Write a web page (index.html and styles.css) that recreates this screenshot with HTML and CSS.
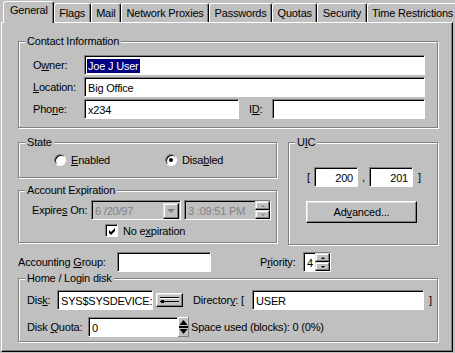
FILE: index.html
```html
<!DOCTYPE html>
<html lang="en">
<head>
  <meta charset="UTF-8">
  <title>User Properties</title>
  <link rel="stylesheet" href="styles.css">
</head>
<body>
<div class="tabs">
  <div class="tab active">General</div>
  <div class="tab">Flags</div>
  <div class="tab">Mail</div>
  <div class="tab">Network Proxies</div>
  <div class="tab">Passwords</div>
  <div class="tab">Quotas</div>
  <div class="tab">Security</div>
  <div class="tab">Time Restrictions</div>
</div>

<div class="panel">
  <div class="group contact">
    <div class="group-title">Contact Information</div>
    <div class="row">
      <span class="lbl lbl-contact">O<u>w</u>ner:</span>
      <div class="field w-full"><span class="selected">Joe J User</span></div>
    </div>
    <div class="row">
      <span class="lbl lbl-contact"><u>L</u>ocation:</span>
      <div class="field w-full">Big Office</div>
    </div>
    <div class="row">
      <span class="lbl lbl-contact">Pho<u>n</u>e:</span>
      <div class="field w-phone">x234</div>
      <span class="lbl lbl-id">I<u>D</u>:</span>
      <div class="field w-id"></div>
    </div>
  </div>

  <div class="middle">
    <div class="left-col">
      <div class="group state">
        <div class="group-title">State</div>
        <div class="radios">
          <label class="radio-opt opt-enabled"><span class="radio"></span><u>E</u>nabled</label>
          <label class="radio-opt"><span class="radio on"></span>Disa<u>b</u>led</label>
        </div>
      </div>

      <div class="group expiration">
        <div class="group-title">Account Expiration</div>
        <div class="row exp-row">
          <span class="lbl lbl-exp">Expire<u>s</u> On:</span>
          <div class="field disabled w-date">
            <span class="value">6 /20/97</span>
            <span class="drop-btn"><span class="arrow-down gray big"></span></span>
          </div>
          <div class="field disabled w-time">
            <span class="value">3 :09:51 PM</span>
            <span class="spin">
              <span class="spin-btn"><span class="arrow-up gray"></span></span>
              <span class="spin-btn"><span class="arrow-down gray"></span></span>
            </span>
          </div>
        </div>
        <label class="check-row">
          <span class="checkbox">
            <svg width="7" height="7" viewBox="0 0 7 7"><polygon points="0,2 2,4 6,0 6,3 2,7 0,5" fill="#000"/></svg>
          </span>
          No e<u>x</u>piration
        </label>
      </div>
    </div>

    <div class="group uic">
      <div class="group-title">U<u>I</u>C</div>
      <div class="row uic-row">
        <span class="bracket-open">[</span>
        <div class="field num w-uic">200</div>
        <span class="comma">,</span>
        <div class="field num w-uic">201</div>
        <span class="bracket-close">]</span>
      </div>
      <div class="button advanced">Ad<u>v</u>anced...</div>
    </div>
  </div>

  <div class="row acct-row">
    <span class="lbl lbl-acct">Accounting <u>G</u>roup:</span>
    <div class="field w-acct"></div>
    <span class="lbl lbl-priority">P<u>r</u>iority:</span>
    <div class="field w-priority">
      <span class="value">4</span>
      <span class="spin">
        <span class="spin-btn"><span class="arrow-up"></span></span>
        <span class="spin-btn"><span class="arrow-down"></span></span>
      </span>
    </div>
  </div>

  <div class="group home">
    <div class="group-title">Home / Login disk</div>
    <div class="row">
      <span class="lbl lbl-disk">Dis<u>k</u>:</span>
      <div class="field w-disk">SYS$SYSDEVICE:</div>
      <span class="button disk-btn">
        <svg width="19" height="6" viewBox="0 0 19 6">
          <rect x="0" y="0" width="19" height="1" fill="#000"/>
          <rect x="0" y="1" width="19" height="1" fill="#fff"/>
          <rect x="0" y="4" width="19" height="1" fill="#000"/>
          <rect x="1" y="3" width="3" height="3" fill="#000"/>
        </svg>
      </span>
      <span class="lbl lbl-dir">Director<u>y</u>: [</span>
      <div class="field w-dir">USER</div>
      <span class="bracket-end">]</span>
    </div>
    <div class="row quota-row">
      <span class="lbl lbl-quota">Disk <u>Q</u>uota:</span>
      <div class="field w-quota">0</div>
      <span class="quota-spin">
        <svg width="11" height="20" viewBox="0 0 11 20">
          <rect x="0" y="0" width="11" height="20" fill="#c0c0c0"/>
          <rect x="0" y="0" width="11" height="1" fill="#fff"/>
          <rect x="0" y="0" width="1" height="20" fill="#fff"/>
          <rect x="10" y="0" width="1" height="20" fill="#808080"/>
          <rect x="0" y="19" width="11" height="1" fill="#808080"/>
          <polygon points="1.5,8 5.5,3 9.5,8" fill="#000"/>
          <rect x="1" y="9" width="9" height="2" fill="#000"/>
          <polygon points="1.5,12 9.5,12 5.5,17" fill="#000"/>
        </svg>
      </span>
      <span class="space-used">Space used (blocks): 0 (0%)</span>
    </div>
  </div>
</div>
</body>
</html>
```

FILE: styles.css
```css
* { box-sizing: border-box; }
body {
  margin: 0;
  width: 455px;
  height: 353px;
  overflow: hidden;
  background-color: #c0c0c0;
  font-family: 'Liberation Sans', Arial, sans-serif;
  font-size: 11px;
  letter-spacing: -0.2px;
  color: #000;
}

u {
  text-decoration: underline;
  text-underline-offset: 1px;
}

/* tabs */
.tabs {
  display: flex;
  align-items: flex-end;
  height: 22px;
  padding-left: 3px;
}

.tab {
  position: relative;
  height: 19px;
  padding: 3px 4.5px 0;
  line-height: 13px;
  white-space: nowrap;
  border-top: 1px solid #fff;
  border-left: 1px solid #fff;
  border-right: 1px solid #000;
  border-radius: 3px 3px 0 0;
  box-shadow: inset -1px 0 0 #808080;
}

.tab.active {
  z-index: 1;
  height: 22px;
  margin-bottom: -1px;
  padding: 2px 5px 0 6px;
  background-color: #c0c0c0;
}

/* main panel */
.panel {
  width: 452px;
  height: 330px;
  margin-left: 1px;
  padding: 18px 0 0 16px;
  border-top: 1px solid #fff;
  border-left: 1px solid #fff;
  border-right: 1px solid #000;
  border-bottom: 1px solid #000;
  box-shadow: inset -1px -1px 0 #808080;
}

.group {
  border: 1px solid #808080;
  box-shadow: 1px 1px 0 #fff, inset 1px 1px 0 #fff;
}

.group-title {
  display: table;
  margin: -7px 0 0 6px;
  padding: 0 2px;
  line-height: 13px;
  background-color: #c0c0c0;
}

.row {
  display: flex;
  align-items: center;
  height: 20px;
  white-space: nowrap;
}

.lbl { flex-shrink: 0; }

/* text boxes */
.field {
  display: flex;
  align-items: center;
  flex-shrink: 0;
  height: 20px;
  padding: 1px 2px 0 3px;
  background-color: #fff;
  border: 1px solid;
  border-color: #808080 #fff #fff #808080;
  box-shadow: inset 1px 1px 0 #000;
  white-space: nowrap;
  overflow: hidden;
}

.field .value { flex: 1; }

.field.disabled {
  background-color: #c0c0c0;
  color: #808080;
}

.field.num {
  justify-content: flex-end;
  padding-right: 4px;
}

.selected {
  display: inline-block;
  margin-left: -1px;
  padding: 0 1px;
  line-height: 14px;
  background-color: #000080;
  color: #fff;
}

/* contact information */
.contact {
  width: 420px;
  height: 87px;
}

.contact .row {
  margin-top: 2px;
  padding-left: 14px;
}

.contact .group-title + .row { margin-top: 7px; }

.lbl-contact { width: 51px; }
.w-full { width: 341px; }
.w-phone { width: 155px; }
.lbl-id { width: 23px; margin-left: 10px; }
.w-id { width: 153px; }

/* middle part */
.middle {
  display: flex;
  align-items: flex-start;
  gap: 11px;
  margin-top: 14px;
}

.left-col {
  display: flex;
  flex-direction: column;
  width: 259px;
}

.state { height: 36px; }

.radios {
  display: flex;
  align-items: center;
  height: 13px;
  margin-top: 4px;
  padding-left: 35px;
}

.radio-opt {
  display: flex;
  align-items: center;
}

.opt-enabled { width: 111px; }

.radio {
  display: flex;
  align-items: center;
  justify-content: center;
  width: 12px;
  height: 12px;
  margin-right: 5px;
  border-radius: 50%;
  background-color: #fff;
  border: 1px solid;
  border-color: #808080 #fff #fff #808080;
  box-shadow: inset 1px 1px 0 #000;
}

.radio.on::after {
  content: '';
  width: 4px;
  height: 4px;
  border-radius: 50%;
  background-color: #000;
}

.expiration {
  height: 53px;
  margin-top: 12px;
}

.exp-row {
  margin-top: 3px;
  padding-left: 13px;
}

.lbl-exp { width: 59px; }

.w-date {
  width: 90px;
  padding-right: 1px;
}

.w-time {
  width: 87px;
  margin-left: 3px;
  padding-right: 0;
}

.drop-btn {
  display: flex;
  align-items: center;
  justify-content: center;
  width: 16px;
  height: 16px;
  background-color: #c0c0c0;
  border: 1px solid;
  border-color: #dfdfdf #000 #000 #dfdfdf;
  box-shadow: inset -1px -1px 0 #808080, inset 1px 1px 0 #fff;
}

.spin {
  display: flex;
  flex-direction: column;
  align-self: stretch;
  width: 15px;
  margin: -1px 0 0;
}

.spin-btn {
  display: flex;
  align-items: center;
  justify-content: center;
  flex: 1;
  background-color: #c0c0c0;
  border: 1px solid;
  border-color: #dfdfdf #000 #000 #dfdfdf;
  box-shadow: inset -1px -1px 0 #808080, inset 1px 1px 0 #fff;
}

.arrow-up,
.arrow-down {
  width: 0;
  height: 0;
  border-left: 2px solid transparent;
  border-right: 2px solid transparent;
}

.arrow-up { border-bottom: 2px solid #000; }
.arrow-down { border-top: 2px solid #000; }
.arrow-up.gray { border-bottom-color: #808080; }
.arrow-down.gray { border-top-color: #808080; }

.arrow-down.big {
  border-left-width: 4px;
  border-right-width: 4px;
  border-top-width: 4px;
}

.check-row {
  display: flex;
  align-items: center;
  height: 13px;
  margin-top: 4px;
  padding-left: 86px;
}

.checkbox {
  display: flex;
  align-items: center;
  justify-content: center;
  width: 13px;
  height: 13px;
  margin-right: 5px;
  padding: 1px 0 0 1px;
  background-color: #fff;
  border: 1px solid;
  border-color: #808080 #fff #fff #808080;
  box-shadow: inset 1px 1px 0 #000;
}

/* UIC */
.uic {
  width: 150px;
  height: 103px;
}

.uic-row {
  margin-top: 18px;
  padding-left: 18px;
}

.w-uic { width: 44px; }
.bracket-open { width: 7px; }
.comma { width: 11px; padding-left: 4px; }
.bracket-close { margin-left: 5px; }

.button {
  display: flex;
  align-items: center;
  justify-content: center;
  background-color: #c0c0c0;
  border: 1px solid;
  border-color: #fff #000 #000 #fff;
  box-shadow: inset -1px -1px 0 #808080, inset 1px 1px 0 #dfdfdf;
}

.advanced {
  width: 111px;
  height: 22px;
  margin: 14px 0 0 17px;
}

/* accounting */
.acct-row { margin-top: 7px; }
.lbl-acct { width: 99px; }
.w-acct { width: 94px; }
.lbl-priority { width: 43px; margin-left: 49px; }

.w-priority {
  width: 28px;
  padding-right: 0;
}

/* home / login disk */
.home {
  width: 420px;
  height: 64px;
  margin-top: 6px;
}

.home .row { padding-left: 8px; }
.home .group-title + .row { margin-top: 5px; }

.lbl-disk { width: 30px; }
.w-disk { width: 96px; }

.disk-btn {
  width: 27px;
  height: 14px;
  margin-left: 3px;
}

.lbl-dir { width: 59px; margin-left: 10px; }
.w-dir { width: 172px; }
.bracket-end { margin-left: 5px; }

.quota-row { margin-top: 7px; }
.lbl-quota { width: 61px; }
.w-quota { width: 90px; }

.quota-spin {
  display: flex;
  width: 11px;
  height: 20px;
}

.space-used { margin-left: 2px; }
```
